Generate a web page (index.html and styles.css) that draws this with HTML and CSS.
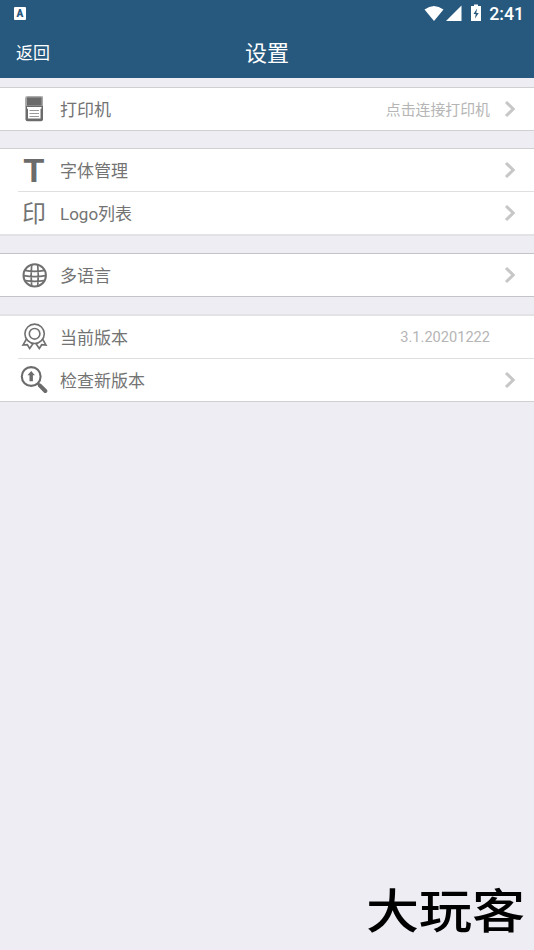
FILE: index.html
```html
<!DOCTYPE html>
<html lang="zh-CN">
<head>
<meta charset="utf-8">
<title>设置</title>
<link rel="stylesheet" href="styles.css">
</head>
<body>
<svg width="0" height="0" class="defs">
  <symbol id="chevron" viewBox="0 0 12 18"><path d="M2 2 9.200 9 2 16" fill="none" stroke="#c7c7c7" stroke-width="3"/></symbol>
</svg>
<header class="header">
  <div class="status">
    <span class="ime">A</span>
    <svg class="signals" width="60" height="18" viewBox="0 0 60 18" fill="#fff">
      <path d="M.5 4.500Q10 -2.500 19.500 4.500L10 16Z"/>
      <path d="M37.500 .5V16H22Z"/>
      <path fill-rule="evenodd" d="M50 -.5h4v1.500h3V16H47V1h3ZM53 3.500 49.500 9h2.200l-.7 4.500L54.700 8h-2.400Z"/>
    </svg>
    <span class="clock">2:41</span>
  </div>
  <div class="navbar">
    <span class="back">返回</span>
    <h1 class="title">设置</h1>
  </div>
</header>
<main class="settings">
  <section class="group">
    <div class="row">
      <span class="icon"><svg width="28" height="28" viewBox="0 0 28 28">
        <rect x="5.500" y="1.500" width="17.500" height="24.700" rx="2" fill="#6b6b6b"/>
        <path d="M5.500 1.500H23V11H5.500Z" fill="#a5a5a5"/><path d="M7 2.500h14.500v8H7Z" fill="#6b6b6b"/>
        <path d="M7 12H21.500v1.700H20.500V23.500H8V13.700H7Z" fill="#fff"/>
        <path d="M9.500 15.500h9.500M9.500 18.500h9.500M9.500 21.500h9.500" stroke="#999" stroke-width="1"/>
      </svg></span>
      <span class="label">打印机</span>
      <span class="value">点击连接打印机</span>
      <svg class="arrow"><use href="#chevron"/></svg>
    </div>
  </section>
  <section class="group fonts">
    <div class="row">
      <span class="icon letter">T</span>
      <span class="label">字体管理</span>
      <svg class="arrow"><use href="#chevron"/></svg>
    </div>
    <div class="row">
      <span class="icon seal">印</span>
      <span class="label">Logo列表</span>
      <svg class="arrow"><use href="#chevron"/></svg>
    </div>
  </section>
  <section class="group language">
    <div class="row">
      <span class="icon"><svg width="28" height="28" viewBox="0 0 28 28" fill="none" stroke="#707070" stroke-width="1.700">
        <circle cx="14.700" cy="14.400" r="11.200" stroke-width="2"/>
        <path d="M11.700 3.500Q10.500 14.500 11.700 25.500M17.700 3.500Q18.900 14.500 17.700 25.500M4.700 9.400Q14.700 11.400 24.700 9.400M3.700 14.700Q14.700 16.700 25.700 14.700M5.200 19.600Q14.700 21.200 24.200 19.600"/>
      </svg></span>
      <span class="label">多语言</span>
      <svg class="arrow"><use href="#chevron"/></svg>
    </div>
  </section>
  <section class="group version">
    <div class="row">
      <span class="icon"><svg width="28" height="28" viewBox="0 0 28 28" fill="none" stroke="#707070" stroke-width="1.600">
        <circle cx="14.600" cy="10.800" r="9.700"/><circle cx="14.600" cy="10.800" r="5.300"/>
        <path d="M6.500 16 3 22l4.300-.3L9.700 25.500 13.300 20.300M22.500 16l3.500 6-4.300-.3L19.300 25.500 15.700 20.300"/>
      </svg></span>
      <span class="label">当前版本</span>
      <span class="value number">3.1.20201222</span>
      <span class="arrow"></span>
    </div>
    <div class="row">
      <span class="icon"><svg width="28" height="28" viewBox="0 0 28 28" fill="none" stroke="#6b6b6b">
        <circle cx="11.200" cy="10.500" r="9.400" stroke-width="2.100"/>
        <path d="m17.800 17.500 2.500 2.500" stroke-width="2.500"/><path d="m20 19.700 5.300 5.300" stroke-width="4" stroke-linecap="round"/>
        <path d="M11.200 5 14.900 9.200H12.900V15.300H9.500V9.200H7.500Z" fill="#6b6b6b" stroke="none"/>
      </svg></span>
      <span class="label">检查新版本</span>
      <svg class="arrow"><use href="#chevron"/></svg>
    </div>
  </section>
</main>
<footer class="brand">大玩客</footer>
</body>
</html>
```
FILE: styles.css
```css
* { box-sizing: border-box; }
body {
  margin: 0;
  height: 950px;
  overflow: hidden;
  display: flex;
  flex-direction: column;
  background: #eeedf3;
  color: #737373;
  font-family: Roboto, "Noto Sans CJK SC", sans-serif;
}
.defs { position: absolute; }
.header { height: 78px; background: #27597e; color: #fff; }
.status { height: 27px; display: flex; align-items: center; padding: 0 10px 0 14px; }
.ime {
  width: 12px;
  height: 13px;
  border-radius: 1px;
  background: #fff;
  color: #27597e;
  font-size: 10px;
  font-weight: 900;
  line-height: 13px;
  text-align: center;
}
.signals { margin-left: auto; margin-right: 5px; overflow: visible; }
.clock { font-size: 17.7px; font-weight: 500; line-height: 27px; padding-top: 1px; }
.navbar {
  height: 51px;
  display: grid;
  grid-template-columns: 1fr auto 1fr;
  align-items: center;
  padding: 0 16px 3px;
}
.back { font-size: 17px; }
.title { margin: 0; font-size: 22px; font-weight: 400; }
.settings { display: flex; flex-direction: column; padding-top: 9px; }
.group {
  display: flex;
  flex-direction: column;
  margin-bottom: 17px;
  background: #fff;
  border-top: 1px solid #d0d0d3;
  border-bottom: 1px solid #d0d0d3;
}
.fonts { border-bottom: 2px solid #e3e3e5; }
.language { border-color: #c4c4c8; }
.version { border-top: 2px solid #e3e3e5; }
.row { height: 42px; display: flex; align-items: center; padding: 0 18px 0 20px; }
.row + .row {
  height: 43px;
  margin-left: 18px;
  padding-left: 2px;
  border-top: 1px solid #dfdfdf;
}
.icon { width: 28px; height: 28px; margin-right: 12px; flex: none; }
.letter { font: bold 34px/29px "Liberation Sans", sans-serif; color: #6b6b6b; text-align: center; }
.seal { font-size: 24px; line-height: 30px; text-align: center; }
.label { font-size: 17px; padding-bottom: 2px; }
.value { margin-left: auto; color: #b5b5b5; font-size: 14.9px; padding-bottom: 2px; }
.number { font-size: 14.6px; padding-bottom: 0; }
.arrow { width: 12px; height: 18px; margin-left: auto; flex: none; }
.value + .arrow { margin-left: 14px; }
.brand {
  margin-top: auto;
  align-self: flex-end;
  padding-right: 9px;
  height: 73px;
  color: #000;
  font: 500 53px/60px "Noto Sans CJK SC", sans-serif;
  transform: scaleY(.88);
}
```
